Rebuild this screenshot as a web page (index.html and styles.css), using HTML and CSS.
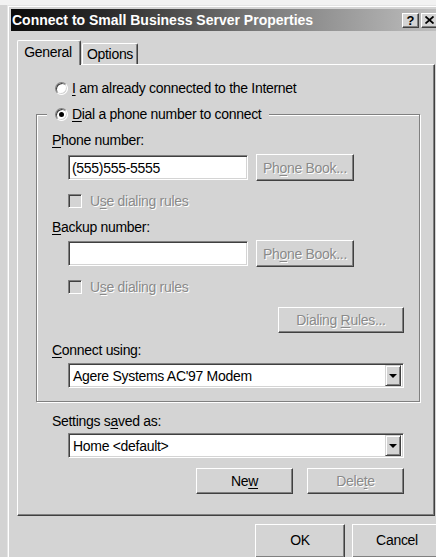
FILE: index.html
```html
<!DOCTYPE html>
<html lang="en">
<head>
<meta charset="utf-8">
<title>Connect to Small Business Server Properties</title>
<link rel="stylesheet" href="styles.css">
</head>
<body>
<div class="window">
  <div class="titlebar">
    <span class="title">Connect to Small Business Server Properties</span>
    <div class="caption-btns">
      <span class="cap-btn help">?</span>
      <span class="cap-btn close">
        <svg width="9" height="8" viewBox="0 0 9 8"><path d="M0.5 0.5 L8.5 7.5 M8.5 0.5 L0.5 7.5" stroke="#000" stroke-width="1.8" fill="none"/></svg>
      </span>
    </div>
  </div>

  <div class="client">
    <div class="tabs">
      <div class="tab active">General</div>
      <div class="tab">Options</div>
    </div>

    <div class="panel">
      <div class="radio-row top-radio">
        <span class="radio"></span>
        <span><u>I</u> am already connected to the Internet</span>
      </div>

      <fieldset class="group">
        <legend class="group-legend"><span class="radio checked"></span><span><u>D</u>ial a phone number to connect</span></legend>

        <div class="label"><u>P</u>hone number:</div>
        <div class="indent">
          <div class="field-row">
            <div class="input">(555)555-5555</div>
            <button class="btn btn-book disabled">Ph<u>o</u>ne Book...</button>
          </div>
          <div class="check-row">
            <span class="check"></span>
            <span class="disabled">U<u>s</u>e dialing rules</span>
          </div>
        </div>

        <div class="label label-backup"><u>B</u>ackup number:</div>
        <div class="indent">
          <div class="field-row backup-row">
            <div class="input"></div>
            <button class="btn btn-book disabled">Ph<u>o</u>ne Book...</button>
          </div>
          <div class="check-row">
            <span class="check"></span>
            <span class="disabled">U<u>s</u>e dialing rules</span>
          </div>
          <div class="right-row rules-row">
            <button class="btn btn-rules disabled">Dialing <u>R</u>ules...</button>
          </div>
        </div>

        <div class="label label-connect"><u>C</u>onnect using:</div>
        <div class="indent">
          <div class="combo">
            <span class="combo-text">Agere Systems AC'97 Modem</span>
            <span class="drop-btn"><span class="tri"></span></span>
          </div>
        </div>
      </fieldset>

      <div class="label label-settings">Settings s<u>a</u>ved as:</div>
      <div class="indent outer-indent">
        <div class="combo">
          <span class="combo-text">Home &lt;default&gt;</span>
          <span class="drop-btn"><span class="tri"></span></span>
        </div>
        <div class="right-row profile-row">
          <button class="btn btn-wide">Ne<u>w</u></button>
          <button class="btn btn-wide disabled">Dele<u>t</u>e</button>
        </div>
      </div>
    </div>

    <div class="dialog-buttons">
      <button class="btn btn-dialog">OK</button>
      <button class="btn btn-dialog">Cancel</button>
    </div>
  </div>
</div>
</body>
</html>
```

FILE: styles.css
```css
* {
  box-sizing: border-box;
}

html,
body {
  margin: 0;
  padding: 0;
}

body {
  width: 436px;
  height: 557px;
  overflow: hidden;
  background: #d3d3d3;
  border-top: 5px solid #f2f2f2;
  font-family: "Liberation Sans", Arial, sans-serif;
  font-size: 14px;
  letter-spacing: -0.3px;
  color: #000;
}

u {
  text-decoration: underline;
  text-underline-offset: 2px;
}

/* window frame (the lower edge sits below the visible area) */
.window {
  margin-left: 7px;
  width: 437px;
  height: 552px;
  overflow: hidden;
  padding: 3px 3px 0 3px;
  background: #d4d4d4;
  border: 1px solid;
  border-bottom: 0;
  border-color: #e4e4e4 #404040 #404040 #e4e4e4;
  box-shadow: inset 1px 1px #fff, inset -1px 0 #808080;
}

.titlebar {
  height: 22px;
  display: flex;
  align-items: center;
  justify-content: space-between;
  padding: 0 2px 0 1px;
  background: linear-gradient(to right, #0c0c0c 0%, #2a2a2a 22%, #7a7a7a 58%, #c0c0c0 100%);
}

.title {
  color: #fff;
  font-weight: bold;
  font-size: 14px;
  letter-spacing: 0;
  white-space: nowrap;
}

.caption-btns {
  display: flex;
  gap: 2px;
}

.cap-btn {
  width: 17px;
  height: 15px;
  display: flex;
  align-items: center;
  justify-content: center;
  background: #d4d4d4;
  border: 1px solid;
  border-color: #fff #404040 #404040 #fff;
  box-shadow: inset -1px -1px #808080;
  font-weight: bold;
  font-size: 13px;
  letter-spacing: 0;
  line-height: 1;
}

/* client area */
.client {
  padding: 9px 0 0 6px;
}

.tabs {
  display: flex;
  align-items: flex-end;
  height: 25px;
  margin-bottom: -1px;
  position: relative;
  z-index: 1;
}

.tab {
  width: 56px;
  height: 21px;
  margin: 0 0 1px 1px;
  display: flex;
  align-items: center;
  justify-content: center;
  background: #d4d4d4;
  border: 1px solid;
  border-bottom: 0;
  border-color: #fff #404040 #fff #fff;
  border-radius: 2px 2px 0 0;
  box-shadow: inset -1px 0 #808080;
}

.tab.active {
  width: 64px;
  height: 25px;
  margin: 0;
  padding: 0 2px 2px 0;
}

.panel {
  width: 418px;
  height: 452px;
  padding: 0 0 0 18px;
  background: #d4d4d4;
  border: 1px solid;
  border-color: #fff #404040 #404040 #fff;
  box-shadow: inset -1px -1px #808080;
}

.radio-row {
  display: flex;
  align-items: center;
  gap: 4px;
  height: 16px;
}

.top-radio {
  margin: 15px 0 0 19px;
}

.radio {
  width: 13px;
  height: 13px;
  flex: none;
  position: relative;
  border-radius: 50%;
  background: #fff;
  border: 1px solid;
  border-color: #808080 #fff #fff #808080;
  box-shadow: inset 1px 1px #404040, inset -1px -1px #d4d4d4;
}

.radio.checked::after {
  content: "";
  position: absolute;
  left: 3px;
  top: 3px;
  width: 5px;
  height: 5px;
  border-radius: 50%;
  background: #000;
}

/* etched group box */
.group {
  width: 384px;
  margin: 10px 0 0 0;
  padding: 0 14px 13px 15px;
  border: 1px solid #808080;
  box-shadow: inset 1px 1px #fff, 1px 1px #fff;
}

.group-legend {
  display: flex;
  align-items: center;
  gap: 4px;
  height: 16px;
  margin-left: -5px;
  padding: 0 8px;
  background: #d4d4d4;
}

.label {
  height: 16px;
  line-height: 16px;
  margin-top: 10px;
}

.indent {
  width: 336px;
  margin-left: 16px;
}

.field-row {
  display: flex;
  align-items: center;
  gap: 8px;
  height: 27px;
  margin-top: 6px;
}

.backup-row {
  margin-top: 5px;
}

.input {
  width: 180px;
  height: 25px;
  display: flex;
  align-items: center;
  padding-left: 3px;
  background: #fff;
  border: 1px solid;
  border-color: #808080 #fff #fff #808080;
  box-shadow: inset 1px 1px #404040, inset -1px -1px #d4d4d4;
}

.btn {
  font: inherit;
  color: #000;
  letter-spacing: inherit;
  padding: 0;
  background: #d4d4d4;
  border: 1px solid;
  border-color: #fff #404040 #404040 #fff;
  box-shadow: inset -1px -1px #808080;
}

.btn-book {
  width: 98px;
  height: 27px;
}

.btn-rules {
  width: 126px;
  height: 26px;
}

.btn-wide {
  width: 97px;
  height: 26px;
}

.btn-dialog {
  width: 90px;
  height: 34px;
  padding-bottom: 2px;
}

.disabled {
  color: #8a8a8a;
  text-shadow: 1px 1px #fff;
}

.check-row {
  display: flex;
  align-items: center;
  gap: 8px;
  height: 16px;
  margin-top: 12px;
}

.check {
  width: 14px;
  height: 14px;
  flex: none;
  background: #d4d4d4;
  border: 1px solid;
  border-color: #808080 #fff #fff #808080;
  box-shadow: inset 1px 1px #404040, inset -1px -1px #d4d4d4;
}

.right-row {
  display: flex;
  justify-content: flex-end;
}

.rules-row {
  margin-top: 12px;
}

.label-connect {
  margin-top: 9px;
}

.combo {
  width: 336px;
  height: 25px;
  margin-top: 5px;
  display: flex;
  align-items: center;
  justify-content: space-between;
  padding: 0 2px 0 4px;
  background: #fff;
  border: 1px solid;
  border-color: #808080 #fff #fff #808080;
  box-shadow: inset 1px 1px #404040, inset -1px -1px #d4d4d4;
}

.drop-btn {
  width: 16px;
  height: 21px;
  display: flex;
  align-items: center;
  justify-content: center;
  background: #d4d4d4;
  border: 1px solid;
  border-color: #d4d4d4 #404040 #404040 #d4d4d4;
  box-shadow: inset 1px 1px #fff, inset -1px -1px #808080;
}

.tri {
  width: 0;
  height: 0;
  border-left: 4px solid transparent;
  border-right: 4px solid transparent;
  border-top: 4px solid #000;
}

.label-settings {
  margin: 11px 0 0 16px;
}

.outer-indent {
  width: 336px;
  margin-left: 32px;
}

.outer-indent .combo {
  margin-top: 4px;
}

.profile-row {
  gap: 14px;
  margin-top: 10px;
}

.dialog-buttons {
  display: flex;
  justify-content: flex-end;
  gap: 7px;
  width: 425px;
  margin-top: 8px;
}
```
